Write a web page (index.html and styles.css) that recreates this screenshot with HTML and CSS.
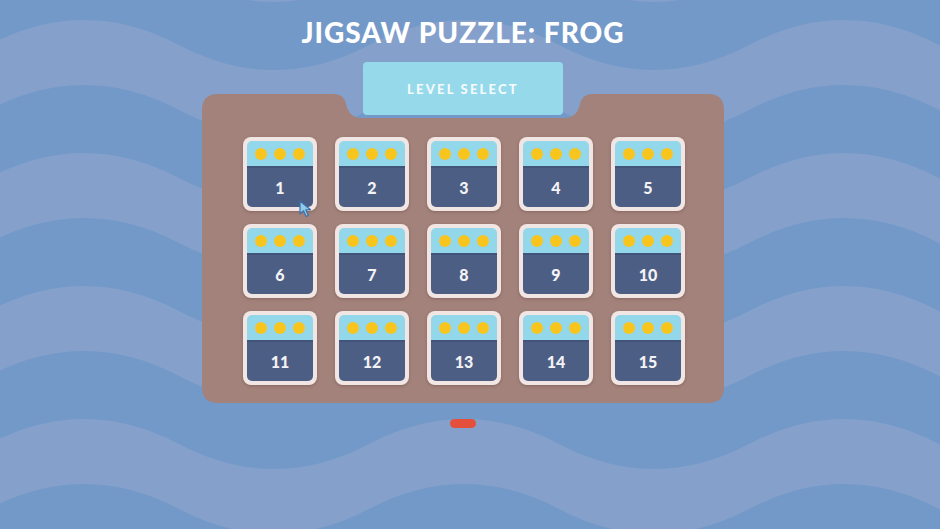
FILE: index.html
```html
<!DOCTYPE html>
<html lang="en">
<head>
    <meta charset="UTF-8">
    <title>Jigsaw Puzzle: Frog</title>
    <link rel="stylesheet" href="styles.css">
</head>
<body>
<!-- wavy sea behind the menu -->
<div class="sea">
    <svg width="940" height="529" viewBox="0 0 940 529">
        <defs>
            <path id="wave" d="M-201 45 Q-106 95 -11 45 T179 45 T369 45 T559 45 T749 45 T939 45 T1129 45 L1129 110 Q1034 160 939 110 T749 110 T559 110 T369 110 T179 110 T-11 110 T-201 110 Z"/>
        </defs>
        <rect width="940" height="529" fill="#7399c9"/>
        <g fill="#85a0cb">
            <use href="#wave" y="-133"/>
            <use href="#wave" y="0"/>
            <use href="#wave" y="133"/>
            <use href="#wave" y="266"/>
            <use href="#wave" y="399"/>
        </g>
    </svg>
</div>

<main class="menu">
    <h1 class="title">JIGSAW PUZZLE: FROG</h1>
    <div class="tab">LEVEL SELECT</div>
    <section class="board">
        <div class="levels">
            <a class="level"><span class="stars"><i></i><i></i><i></i></span><span class="num">1</span></a>
            <a class="level"><span class="stars"><i></i><i></i><i></i></span><span class="num">2</span></a>
            <a class="level"><span class="stars"><i></i><i></i><i></i></span><span class="num">3</span></a>
            <a class="level"><span class="stars"><i></i><i></i><i></i></span><span class="num">4</span></a>
            <a class="level"><span class="stars"><i></i><i></i><i></i></span><span class="num">5</span></a>
            <a class="level"><span class="stars"><i></i><i></i><i></i></span><span class="num">6</span></a>
            <a class="level"><span class="stars"><i></i><i></i><i></i></span><span class="num">7</span></a>
            <a class="level"><span class="stars"><i></i><i></i><i></i></span><span class="num">8</span></a>
            <a class="level"><span class="stars"><i></i><i></i><i></i></span><span class="num">9</span></a>
            <a class="level"><span class="stars"><i></i><i></i><i></i></span><span class="num">10</span></a>
            <a class="level"><span class="stars"><i></i><i></i><i></i></span><span class="num">11</span></a>
            <a class="level"><span class="stars"><i></i><i></i><i></i></span><span class="num">12</span></a>
            <a class="level"><span class="stars"><i></i><i></i><i></i></span><span class="num">13</span></a>
            <a class="level"><span class="stars"><i></i><i></i><i></i></span><span class="num">14</span></a>
            <a class="level"><span class="stars"><i></i><i></i><i></i></span><span class="num">15</span></a>
        </div>
    </section>
    <div class="pager"><span class="dot"></span></div>
</main>

<svg class="cursor" width="13" height="18" viewBox="0 0 13 18">
    <path d="M1 1 L1 14 L4.5 10.8 L7.2 16.5 L9.4 15.5 L6.8 9.8 L11.5 9.8 Z" fill="#8fcbea" stroke="#3d6ea6" stroke-width="1.2" stroke-linejoin="round"/>
</svg>
</body>
</html>
```

FILE: styles.css
```css
*{
    margin:0;
    padding:0;
    box-sizing:border-box;
}
body{
    width:940px;
    height:529px;
    overflow:hidden;
    position:relative;
    padding:18px 14px 0 0;
    font-family:"Lato","Liberation Sans",sans-serif;
    color:#fff;
}
.sea{
    position:absolute;
    top:0;
    left:0;
    z-index:-1;
}
.sea svg{
    display:block;
}

.menu{
    display:flex;
    flex-direction:column;
    align-items:center;
}
.title{
    font-size:28px;
    line-height:28px;
    font-weight:900;
    letter-spacing:1px;
}
.tab{
    position:relative;
    z-index:2;
    width:200px;
    height:53px;
    margin-top:16px;
    border-radius:4px;
    background:#95d9eb;
    display:flex;
    align-items:center;
    justify-content:center;
    font-size:13px;
    font-weight:900;
    letter-spacing:2.2px;
    color:#f4fbfd;
}

/* brown board with a notch cut for the tab */
.board{
    width:522px;
    height:309px;
    margin-top:-21px;
    padding:43px 39px 0 41px;
    background:#a3827b;
    clip-path:path("M16 0 H132 Q142 0 144 10 Q147 24 160 24 H362 Q375 24 378 10 Q380 0 390 0 H506 Q522 0 522 16 V293 Q522 309 506 309 H16 Q0 309 0 293 V16 Q0 0 16 0 Z");
}
.levels{
    display:grid;
    grid-template-columns:repeat(5,74px);
    grid-auto-rows:74px;
    column-gap:18px;
    row-gap:13px;
}
.level{
    display:flex;
    flex-direction:column;
    padding:4px;
    border-radius:8px;
    background:#f1e6e3;
    box-shadow:0 1px 3px rgba(80,50,45,0.35);
    cursor:pointer;
}
.level .stars{
    height:25px;
    display:flex;
    align-items:center;
    justify-content:center;
    gap:7px;
    border-radius:5px 5px 0 0;
    background:#93d7ea;
}
.level .stars i{
    width:12px;
    height:12px;
    border-radius:50%;
    background:#f8c51f;
}
.level .num{
    flex:1;
    display:flex;
    align-items:center;
    justify-content:center;
    border-top:2px solid #43547a;
    border-radius:0 0 5px 5px;
    background:#4d5e84;
    font-size:16px;
    font-weight:900;
    color:#f3f3f6;
}

.pager{
    margin-top:16px;
}
.pager .dot{
    display:block;
    width:26px;
    height:9px;
    border-radius:5px;
    background:#e4503c;
}

.cursor{
    position:absolute;
    left:299px;
    top:200px;
}
```
